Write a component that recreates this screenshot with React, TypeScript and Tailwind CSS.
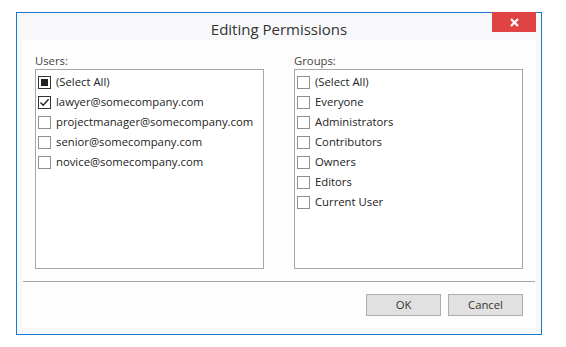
import React from "react";

type State = "checked" | "unchecked" | "indeterminate";

function Box({ state }: { state: State }) {
  if (state === "checked") {
    return (
      <span className="w-[13px] h-[13px] border border-[#333333] bg-white flex items-center justify-center shrink-0">
        <svg width="11" height="11" viewBox="0 0 11 11">
          <path d="M1.5 5.5 L4.2 8.3 L9.6 2.2" fill="none" stroke="#222" strokeWidth="1.4" />
        </svg>
      </span>
    );
  }
  if (state === "indeterminate") {
    return (
      <span className="w-[13px] h-[13px] border border-[#333333] bg-white flex items-center justify-center shrink-0">
        <span className="w-[7px] h-[7px] bg-[#222222]" />
      </span>
    );
  }
  return <span className="w-[13px] h-[13px] border border-[#8f8f8f] bg-white shrink-0" />;
}

function ListBox({ label, items }: { label: string; items: { text: string; state: State }[] }) {
  return (
    <div className="flex flex-col w-[229px]">
      <div className="h-[16px] leading-[16px] text-[11.3px] text-[#444]">{label}</div>
      <div className="h-[200px] border border-[#a7a7a7] bg-white pt-[2px] pl-[2px]">
        {items.map((it) => (
          <div key={it.text} className="h-[20px] flex items-center gap-[5px] text-[11.3px] text-[#222]">
            <Box state={it.state} />
            <span>{it.text}</span>
          </div>
        ))}
      </div>
    </div>
  );
}

export default function App() {
  const users: { text: string; state: State }[] = [
    { text: "(Select All)", state: "indeterminate" },
    { text: "lawyer@somecompany.com", state: "checked" },
    { text: "projectmanager@somecompany.com", state: "unchecked" },
    { text: "senior@somecompany.com", state: "unchecked" },
    { text: "novice@somecompany.com", state: "unchecked" },
  ];
  const groups: { text: string; state: State }[] = [
    { text: "(Select All)", state: "unchecked" },
    { text: "Everyone", state: "unchecked" },
    { text: "Administrators", state: "unchecked" },
    { text: "Contributors", state: "unchecked" },
    { text: "Owners", state: "unchecked" },
    { text: "Editors", state: "unchecked" },
    { text: "Current User", state: "unchecked" },
  ];
  return (
    <div className="w-[566px] h-[347px] bg-white pt-[12px] pl-[16px]" style={{ fontFamily: '"Open Sans", "Noto Sans", sans-serif' }}>
      <div className="relative w-[526px] h-[323px] border border-[#1a79cc] bg-[#f8f8fa] flex flex-col">
        <div className="h-[27px] flex items-center justify-center text-[15px] text-[#333] pt-[5px]">
          Editing Permissions
        </div>
        <button className="absolute top-[-1px] right-[5px] w-[44px] h-[20px] bg-[#e04343] flex items-center justify-center">
          <svg width="9" height="9" viewBox="0 0 9 9">
            <path d="M1 1 L8 8 M8 1 L1 8" stroke="white" strokeWidth="2.2" />
          </svg>
        </button>
        <div className="mx-[5px] w-[514px] h-[288px] bg-[#fdfdfd] flex flex-col pt-[13px]">
          <div className="flex gap-[30px] px-[13px]">
            <ListBox label="Users:" items={users} />
            <ListBox label="Groups:" items={groups} />
          </div>
          <div className="mt-[12px] mx-[1px] h-px bg-[#a7a7a7]" />
          <div className="mt-[12px] flex justify-end gap-[7px] px-[13px]">
            <button className="w-[75px] h-[22px] border border-[#adadad] bg-[#e1e1e1] text-[11.3px] text-[#333]">OK</button>
            <button className="w-[75px] h-[22px] border border-[#adadad] bg-[#e1e1e1] text-[11.3px] text-[#333]">Cancel</button>
          </div>
        </div>
      </div>
    </div>
  );
}
